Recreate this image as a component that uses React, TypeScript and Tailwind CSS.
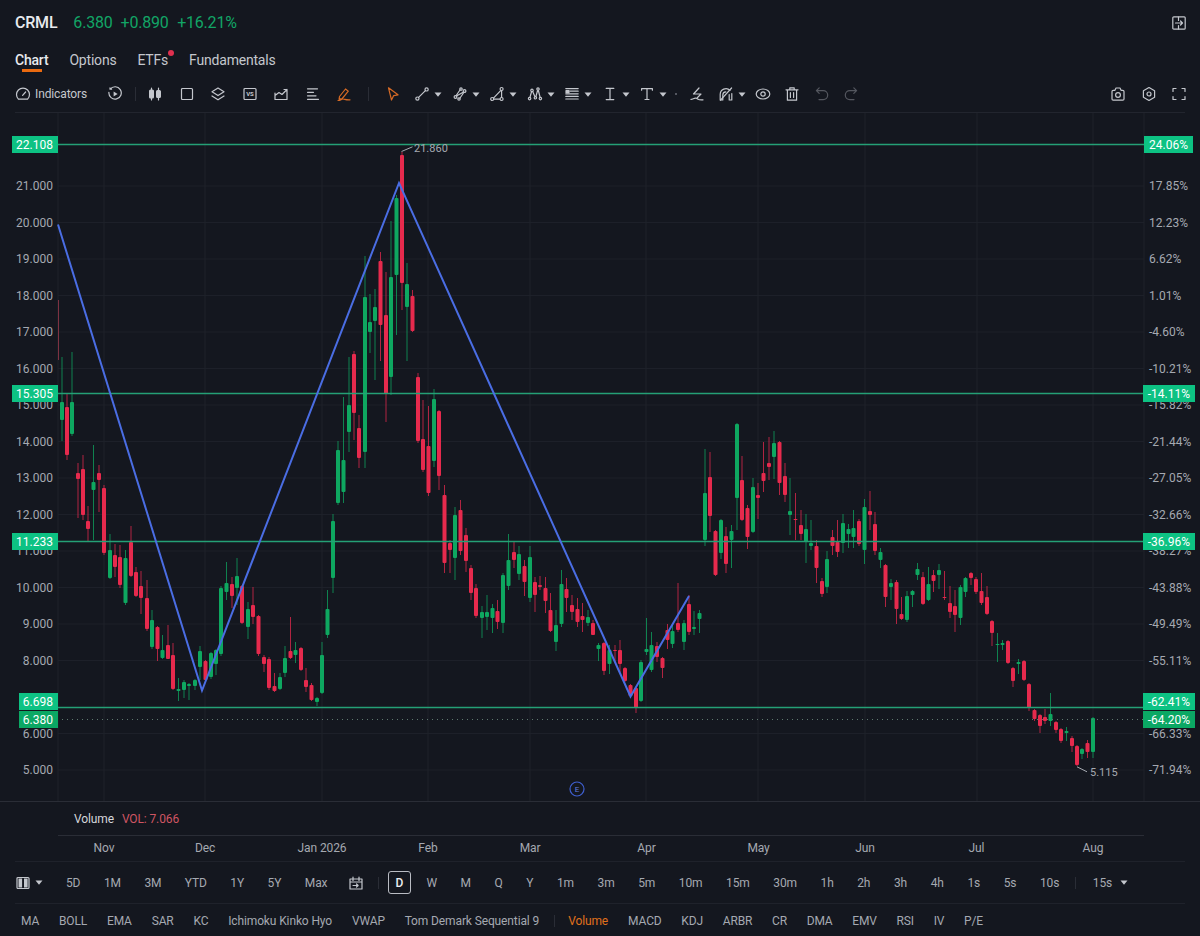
import type { ReactNode } from "react";

type Candle = [number, number, number, number, number, "r" | "g"];

// x, wick top, body top, body bottom, wick bottom
const candles: Candle[] = [
  [62, 357, 402, 420, 441, "g"], [67, 393, 407, 455, 460, "r"], [72, 352, 402, 434, 436, "g"],
  [78, 463, 473, 479, 518, "r"], [83, 455, 469, 515, 520, "r"], [88, 506, 521, 529, 541, "r"],
  [93.5, 445, 482, 490, 540, "g"], [99, 465, 473, 480, 512, "r"], [104, 485, 488, 553, 555, "r"],
  [110, 534, 550, 578, 579, "g"], [115, 544, 555, 567, 577, "r"], [120, 545, 557, 585, 588, "r"],
  [125.5, 550, 558, 603, 605, "g"], [131, 526, 542, 576, 577, "r"], [136, 567, 572, 596, 597, "r"],
  [141, 571, 586, 598, 614, "r"], [147, 580, 598, 629, 631, "r"], [152, 610, 620, 647, 649, "g"],
  [157.5, 626, 627, 649, 661, "r"], [162.5, 635, 650, 658, 659, "g"], [168, 625, 645, 659, 659, "r"],
  [173, 643, 655, 689, 690, "r"], [178.5, 678, 689, 691, 701, "g"], [184, 680, 682, 690, 698, "g"],
  [189, 683, 684, 686, 700, "g"], [195, 679, 680, 686, 690, "g"], [200, 646, 651, 667, 680, "g"],
  [205.5, 660, 661, 680, 682, "r"], [211, 652, 653, 677, 679, "g"], [216, 649, 650, 664, 675, "g"],
  [221, 586, 588, 654, 656, "g"], [226.5, 562, 583, 592, 600, "g"], [232, 577, 584, 596, 608, "r"],
  [237, 558, 576, 588, 605, "g"], [242, 585, 586, 623, 624, "r"], [248, 602, 609, 627, 639, "g"],
  [253, 587, 605, 617, 624, "r"], [258.5, 615, 616, 654, 656, "r"], [264, 655, 657, 664, 672, "r"],
  [269, 657, 659, 688, 690, "r"], [274.5, 673, 686, 691, 692, "r"], [280, 673, 677, 689, 690, "g"],
  [285, 646, 658, 673, 677, "g"], [290.5, 617, 651, 658, 659, "r"], [295.5, 642, 650, 655, 663, "g"],
  [301, 647, 648, 670, 671, "r"], [306, 668, 680, 687, 692, "r"], [311.5, 683, 685, 700, 701, "r"],
  [317, 697, 698, 702, 706, "g"], [322, 642, 655, 693, 694, "g"], [327.5, 590, 609, 635, 638, "g"],
  [333, 514, 521, 578, 593, "g"], [338, 441, 450, 503, 505, "g"], [343.5, 397, 460, 492, 503, "g"],
  [349, 357, 405, 432, 452, "g"], [354, 351, 354, 413, 440, "r"], [359, 415, 428, 458, 468, "r"],
  [365, 256, 297, 452, 468, "g"], [370, 294, 322, 332, 353, "g"], [375, 289, 307, 321, 380, "g"],
  [380.5, 252, 261, 325, 361, "r"], [386, 272, 315, 394, 422, "r"], [391, 221, 277, 377, 395, "g"],
  [396.5, 195, 198, 275, 335, "g"], [402, 152, 155, 283, 310, "r"], [407, 263, 284, 307, 361, "g"],
  [412.5, 290, 296, 331, 332, "r"], [418, 373, 377, 441, 443, "r"], [423, 400, 439, 470, 472, "r"],
  [428.5, 406, 446, 493, 496, "r"], [434, 389, 399, 461, 467, "g"], [439, 410, 411, 476, 490, "r"],
  [444.5, 485, 495, 563, 573, "r"], [450, 540, 543, 550, 573, "r"], [455, 507, 515, 558, 580, "g"],
  [460.5, 500, 510, 551, 555, "r"], [466, 528, 535, 561, 572, "r"], [471, 565, 568, 593, 600, "r"],
  [476, 584, 588, 616, 618, "r"], [482, 606, 612, 618, 638, "g"], [487, 595, 612, 617, 630, "g"],
  [492.5, 604, 608, 618, 633, "g"], [497.5, 600, 611, 622, 629, "r"], [503, 573, 575, 623, 633, "g"],
  [508.5, 534, 560, 586, 590, "g"], [514, 541, 552, 560, 568, "r"], [519, 546, 554, 574, 580, "g"],
  [524.5, 560, 566, 582, 596, "r"], [530, 546, 557, 598, 602, "g"], [535, 577, 582, 595, 612, "r"],
  [540, 576, 585, 587, 590, "r"], [545.5, 577, 588, 601, 613, "r"], [550.5, 593, 610, 631, 632, "r"],
  [556, 610, 625, 642, 651, "g"], [561.5, 570, 584, 624, 627, "g"], [566.5, 578, 589, 598, 612, "r"],
  [572, 595, 605, 612, 620, "r"], [577.5, 598, 609, 622, 627, "r"], [582.5, 603, 616, 620, 632, "r"],
  [588, 610, 617, 623, 626, "g"], [593, 620, 623, 635, 635, "r"], [598.5, 643, 645, 649, 661, "g"],
  [604, 642, 643, 671, 675, "r"], [609.5, 645, 650, 664, 674, "g"], [615, 645, 650, 651, 662, "r"],
  [620, 640, 650, 664, 672, "r"], [625, 667, 668, 681, 682, "r"], [630.5, 684, 685, 696, 698, "r"],
  [636, 687, 688, 708, 713, "r"], [641, 660, 662, 701, 702, "g"], [646.5, 618, 649, 652, 655, "g"],
  [651.5, 632, 645, 670, 672, "g"], [657, 642, 646, 657, 662, "r"], [662.5, 657, 658, 668, 678, "r"],
  [667.5, 624, 630, 640, 649, "r"], [672.5, 625, 631, 644, 648, "g"], [678, 583, 623, 630, 632, "r"],
  [684, 620, 623, 642, 650, "g"], [689, 595, 604, 632, 635, "r"], [694, 611, 627, 629, 635, "g"],
  [699.5, 610, 613, 619, 633, "g"], [705, 449, 493, 540, 546, "g"], [710, 452, 477, 516, 532, "r"],
  [715.5, 530, 531, 575, 576, "r"], [721, 519, 520, 553, 559, "g"], [726, 527, 536, 564, 573, "r"],
  [731.5, 525, 531, 540, 568, "g"], [737, 423, 424, 498, 530, "g"], [742, 456, 480, 520, 521, "r"],
  [747.5, 505, 508, 537, 549, "r"], [753, 478, 487, 532, 533, "g"], [758, 483, 495, 498, 519, "r"],
  [763.5, 442, 473, 481, 492, "r"], [769, 437, 463, 467, 480, "r"], [774, 431, 443, 457, 479, "g"],
  [779.5, 441, 442, 483, 495, "r"], [785, 463, 476, 495, 502, "r"], [790, 478, 511, 515, 535, "g"],
  [795.5, 493, 519, 520, 540, "r"], [801, 510, 525, 534, 540, "r"], [806, 514, 529, 542, 563, "g"],
  [811, 520, 543, 546, 550, "g"], [816.5, 540, 546, 568, 583, "r"], [822, 578, 581, 594, 597, "r"],
  [827, 551, 559, 587, 593, "g"], [832.5, 530, 537, 546, 555, "r"], [837.5, 520, 542, 552, 557, "r"],
  [843, 514, 523, 543, 553, "g"], [848.5, 524, 529, 534, 548, "g"], [853.5, 510, 528, 537, 548, "g"],
  [859, 519, 521, 544, 546, "r"], [864.5, 499, 507, 550, 564, "g"], [870, 491, 511, 515, 530, "r"],
  [875, 512, 524, 551, 555, "r"], [880.5, 548, 552, 560, 568, "g"], [885.5, 564, 565, 597, 607, "r"],
  [891, 579, 583, 587, 600, "g"], [896.5, 580, 582, 609, 624, "r"], [901.5, 597, 614, 619, 620, "r"],
  [907, 591, 596, 620, 622, "g"], [912.5, 590, 591, 595, 607, "g"], [917.5, 563, 569, 575, 580, "g"],
  [923, 572, 577, 604, 605, "r"], [928.5, 567, 584, 600, 601, "g"], [933.5, 570, 575, 581, 592, "r"],
  [939, 564, 570, 575, 589, "g"], [944.5, 571, 597, 598, 600, "r"], [950, 586, 603, 612, 618, "r"],
  [955, 590, 606, 615, 632, "r"], [960.5, 585, 587, 618, 625, "g"], [965.5, 577, 578, 592, 597, "g"],
  [971, 572, 573, 578, 585, "r"], [976, 577, 579, 592, 594, "r"], [981.5, 573, 591, 603, 605, "r"],
  [987, 586, 597, 614, 615, "r"], [992, 620, 621, 633, 646, "r"], [997.5, 633, 644, 645, 662, "g"],
  [1002.5, 640, 643, 645, 650, "g"], [1008, 640, 641, 663, 664, "r"], [1013, 667, 668, 681, 687, "r"],
  [1018.5, 659, 662, 664, 674, "g"], [1024, 660, 661, 680, 681, "r"], [1029, 683, 684, 708, 711, "r"],
  [1034.5, 709, 710, 719, 721, "r"], [1040, 714, 715, 726, 733, "r"], [1045, 709, 717, 721, 724, "r"],
  [1050.5, 693, 714, 721, 726, "g"], [1056, 721, 722, 730, 733, "r"], [1061, 728, 729, 741, 743, "r"],
  [1066.5, 727, 731, 733, 741, "g"], [1072, 736, 738, 746, 752, "r"], [1077, 745, 746, 765, 766, "r"],
  [1082, 748, 749, 754, 759, "g"], [1087.5, 740, 743, 752, 758, "r"], [1093, 717, 718, 752, 758, "g"],
];

const leftTicks = [
  ["21.000", 186], ["20.000", 222.5], ["19.000", 259], ["18.000", 295.5], ["17.000", 332], ["16.000", 368.5],
  ["15.000", 405], ["14.000", 441.5], ["13.000", 478], ["12.000", 514.5], ["11.000", 551], ["10.000", 587.5],
  ["9.000", 624], ["8.000", 660.5], ["6.000", 733.5], ["5.000", 770],
] as const;

const rightTicks = [
  ["17.85%", 186], ["12.23%", 222.5], ["6.62%", 259], ["1.01%", 295.5], ["-4.60%", 332], ["-10.21%", 368.5],
  ["-15.82%", 405], ["-21.44%", 441.5], ["-27.05%", 478], ["-32.66%", 514.5], ["-38.27%", 551], ["-43.88%", 587.5],
  ["-49.49%", 624], ["-55.11%", 660.5], ["-66.33%", 733.5], ["-71.94%", 770],
] as const;

const gridX = [58, 104, 205, 322, 428, 530, 646, 758, 865, 977, 1093, 1144];
const months = [
  ["Nov", 104], ["Dec", 205], ["Jan 2026", 322], ["Feb", 428], ["Mar", 530],
  ["Apr", 646.5], ["May", 758.5], ["Jun", 865], ["Jul", 976.5], ["Aug", 1093],
] as const;

const Ico = ({ children, className = "text-[#c4c7cd]" }: { children: ReactNode; className?: string }) => (
  <svg width="16" height="16" viewBox="0 0 16 16" fill="none" stroke="currentColor" strokeWidth="1.2" strokeLinecap="round" strokeLinejoin="round" className={`shrink-0 ${className}`}>
    {children}
  </svg>
);

const Caret = () => (
  <svg width="8" height="5" viewBox="0 0 8 5" className="shrink-0 text-[#c4c7cd]">
    <path d="M0.5 0.5h7L4 4.7z" fill="currentColor" />
  </svg>
);

const Sep = ({ className = "h-[14px]" }: { className?: string }) => <div className={`w-px bg-[#2a2d36] ${className}`} />;

const Tag = ({ top, left, width, text, dark }: { top: number; left: number; width: number; text: string; dark?: boolean }) => (
  <div
    className={`absolute h-[17px] flex items-center justify-end pr-[5px] text-[12px] leading-none text-white ${dark ? "bg-[#0ba864]" : "bg-[#0dc283]"}`}
    style={{ top, left, width }}
  >
    {text}
  </div>
);

const ranges = ["5D", "1M", "3M", "YTD", "1Y", "5Y", "Max"];
const periods = ["W", "M", "Q", "Y", "1m", "3m", "5m", "10m", "15m", "30m", "1h", "2h", "3h", "4h", "1s", "5s", "10s"];
const overlays = ["MA", "BOLL", "EMA", "SAR", "KC", "Ichimoku Kinko Hyo", "VWAP", "Tom Demark Sequential 9"];
const subs = ["MACD", "KDJ", "ARBR", "CR", "DMA", "EMV", "RSI", "IV", "P/E"];

export default function App() {
  return (
    <div className="w-[1200px] h-[936px] overflow-hidden bg-[#14171f] font-[Roboto,sans-serif] flex flex-col text-[#a5a9b1]">
      <div className="h-[44px] flex items-center justify-between pl-[15px] pr-[13px] pt-[1px]">
        <div className="flex items-center text-[16px] tracking-[-0.2px] text-[#12a566]">
          <span className="font-medium text-[#e8eaee] mr-[16px]">CRML</span>
          <span className="mr-[8px]">6.380</span>
          <span className="mr-[8.5px]">+0.890</span>
          <span>+16.21%</span>
        </div>
        <Ico>
          <rect x="1.8" y="1.8" width="12.4" height="12.4" rx="1" />
          <path d="M7.5 2v3.5M7.5 10.5V14M4.5 8h7M9.5 6l2 2-2 2" />
        </Ico>
      </div>

      <div className="h-[32px] flex items-start gap-[21px] pl-[15px] pt-[7px] text-[14px] leading-[18px] tracking-[-0.2px] text-[#c4c7cd]">
        <div className="relative font-medium text-[#e8eaee]">
          Chart
          <div className="absolute left-[7px] top-[18px] w-[20px] h-[3px] bg-[#ea6a10]" />
        </div>
        <div>Options</div>
        <div className="relative">
          ETFs
          <div className="absolute -right-[6px] -top-[1px] w-[6px] h-[6px] rounded-full bg-[#e0304f]" />
        </div>
        <div>Fundamentals</div>
      </div>

      <div className="h-[37px] mx-[15px] border-b border-[#22252e] flex items-center justify-between">
        <div className="flex items-center">
          <Ico>
            <path d="M3.4 13.2a6.5 6.5 0 1 1 9.2 0z" />
            <path d="M7.6 9.4L10.6 6" />
          </Ico>
          <span className="ml-[4px] w-[52px] text-[12px] tracking-[-0.12px] text-[#c4c7cd] whitespace-nowrap">Indicators</span>
          <div className="ml-[20px]">
            <Ico>
              <path d="M3 3.2V1.8M3 3.2h1.6M3.2 3.1a6.2 6.2 0 1 1-1.3 3.3" />
              <path d="M6.6 5.5v5l4-2.5z" fill="currentColor" stroke="none" />
            </Ico>
          </div>
          <Sep className="h-[14px] ml-[12px]" />
          <div className="flex items-center gap-[15.5px] ml-[11px]">
            <Ico>
              <path d="M4.5 2v12M11.5 2v12" />
              <rect x="2.6" y="4" width="3.8" height="8" rx="1" fill="currentColor" />
              <rect x="9.6" y="4.5" width="3.8" height="7" rx="1" fill="currentColor" />
            </Ico>
            <Ico>
              <rect x="2.5" y="2.5" width="11" height="11" rx="1" />
            </Ico>
            <Ico>
              <path d="M8 2l6 3.8L8 9.6 2 5.8z" />
              <path d="M2 10l6 3.8 6-3.8" />
            </Ico>
            <Ico>
              <rect x="2" y="2.5" width="12" height="11" rx="1" />
              <text x="8" y="10.3" textAnchor="middle" fontSize="6" fontWeight="700" fill="currentColor" stroke="none">VS</text>
            </Ico>
            <Ico>
              <path d="M2 7v6.5h12V6M2 9.5l4-3 3 2 5-5M11 3.5h3V6" />
            </Ico>
            <Ico>
              <path d="M2.5 2.8h10M2.5 6.3h6M2.5 9.8h8.5M2.5 13.3h11" />
            </Ico>
            <Ico className="text-[#d56a25]">
              <path d="M3.5 10.5L9.5 3l2.8 2.2-6 7.3-3.2.6zM2 14.5c3 0 3-1.5 5-1.5s2 1 7 .8" />
            </Ico>
          </div>
          <Sep className="h-[14px] ml-[16px]" />
          <div className="ml-[16px]">
            <Ico className="text-[#d56a25]">
              <path d="M3.5 1.8l9.5 7-4.3.8L6.5 14z" />
            </Ico>
          </div>
          <div className="ml-[13px] flex items-center gap-[4px]">
            <Ico>
              <circle cx="3.4" cy="12.6" r="1.6" />
              <circle cx="12.6" cy="3.4" r="1.6" />
              <path d="M4.6 11.4l6.8-6.8" />
            </Ico>
            <Caret />
          </div>
          <div className="ml-[9.5px] flex items-center gap-[4px]">
            <Ico>
              <circle cx="3.5" cy="11" r="1.4" />
              <circle cx="12.5" cy="5" r="1.4" />
              <circle cx="7" cy="13" r="1.2" />
              <circle cx="9" cy="3" r="1.2" />
              <path d="M4.5 10L11.5 6M8 12l3.5-5M4.5 9L8 4" />
            </Ico>
            <Caret />
          </div>
          <div className="ml-[9.5px] flex items-center gap-[4px]">
            <Ico>
              <path d="M3.5 13.2L12.6 3.6V13.2z" />
              <circle cx="3.2" cy="13" r="1.5" fill="#14171f" />
              <circle cx="12.6" cy="13" r="1.5" fill="#14171f" />
              <circle cx="12.6" cy="3" r="1.5" fill="#14171f" />
            </Ico>
            <Caret />
          </div>
          <div className="ml-[9.5px] flex items-center gap-[4px]">
            <Ico>
              <path d="M2.5 13L5 4l3.5 8 2.5-9 2.5 10" />
              <circle cx="2.6" cy="12.6" r="1.2" fill="#14171f" />
              <circle cx="5" cy="4.4" r="1.2" fill="#14171f" />
              <circle cx="8.4" cy="11.8" r="1.2" fill="#14171f" />
              <circle cx="11" cy="3" r="1.2" fill="#14171f" />
              <circle cx="13.4" cy="12.6" r="1.2" fill="#14171f" />
            </Ico>
            <Caret />
          </div>
          <div className="ml-[9.5px] flex items-center gap-[4px]">
            <Ico>
              <path d="M1.8 2.6h12.4M6 5.2h8.2M1.8 7.8h12.4M1.8 10.4h12.4M1.8 13h12.4" />
              <rect x="2" y="4.6" width="3" height="2" fill="currentColor" />
            </Ico>
            <Caret />
          </div>
          <div className="ml-[9.5px] flex items-center gap-[4px]">
            <Ico>
              <path d="M4.2 2.4h7.6M8 2.4v11.2M4.2 13.6h7.6" />
            </Ico>
            <Caret />
          </div>
          <div className="ml-[9.5px] flex items-center gap-[4px]">
            <Ico>
              <path d="M2.6 4.2V2.6h10.8v1.6M8 2.6v10.9M6 13.5h4" />
            </Ico>
            <Caret />
          </div>
          <div className="ml-[8px] w-[2px] h-[2px] rounded-full bg-[#6a6e77]" />
          <div className="ml-[12px]">
            <Ico>
              <path d="M10 2L4.5 8h7.5l-3.5 3.5M2 13.4c2 0 3-1.6 5-1.2s2 2.2 7 1.6" />
            </Ico>
          </div>
          <div className="ml-[13px] flex items-center gap-[4px]">
            <Ico>
              <path d="M2.2 14V8.5a5.8 5.8 0 0 1 9.8-4.2M13.8 7.5V14h-2.6V8.6M2.2 14h2.6V9a3.2 3.2 0 0 1 3-3.2" />
              <path d="M2.5 14.2L13.6 2" />
            </Ico>
            <Caret />
          </div>
          <div className="ml-[8.5px]">
            <Ico>
              <ellipse cx="8" cy="8" rx="6.8" ry="5" />
              <circle cx="8" cy="8" r="2.2" />
            </Ico>
          </div>
          <div className="ml-[13px]">
            <Ico>
              <path d="M2 3.8h12M5.8 3.6V1.8h4.4v1.8M3.4 3.8v10.4h9.2V3.8M6.4 6.5v5M9.6 6.5v5" />
            </Ico>
          </div>
          <div className="ml-[14px]">
            <Ico className="text-[#54575f]">
              <path d="M5.2 1.8L2.4 4.6l2.8 2.8M2.6 4.6h6.6a4.5 4.5 0 0 1 0 9H5" />
            </Ico>
          </div>
          <div className="ml-[13px]">
            <Ico className="text-[#54575f]">
              <path d="M10.8 1.8l2.8 2.8-2.8 2.8M13.4 4.6H6.8a4.5 4.5 0 0 0 0 9H11" />
            </Ico>
          </div>
        </div>
        <div className="flex items-center gap-[14.5px] mr-[-2px]">
          <Ico>
            <path d="M2 5.6c0-.8.5-1.2 1.2-1.2h1.6L6 2h4l1.2 2.4h1.6c.7 0 1.2.4 1.2 1.2v7.4c0 .7-.5 1.2-1.2 1.2H3.2c-.7 0-1.2-.5-1.2-1.2z" />
            <circle cx="8" cy="9" r="2.4" />
          </Ico>
          <Ico>
            <path d="M8 1.5l5.6 3.2v6.6L8 14.5l-5.6-3.2V4.7z" />
            <circle cx="8" cy="8" r="2" />
          </Ico>
          <Ico>
            <path d="M2 5.5V2.5h3M11 2.5h3v3M14 10.5v3h-3M5 13.5H2v-3" />
          </Ico>
        </div>
      </div>

      <div className="relative h-[689px] border-b border-[#2a2d36]">
        <svg className="block" width="1200" height="688" viewBox="0 113 1200 688">
          {leftTicks.map(([, y]) => (
            <line key={y} x1="58" x2="1144" y1={y} y2={y} stroke="#1d2029" />
          ))}
          {gridX.map((x) => (
            <line key={x} x1={x} x2={x} y1="113" y2="801" stroke="#1f222b" />
          ))}
          <line x1="58.5" x2="58.5" y1="300" y2="360" stroke="#7d3242" />
          {candles.map(([x, wt, bt, bb, wb, side]) => {
            const color = side === "r" ? "#e62a4d" : "#0ea760";
            return (
              <g key={x}>
                <line x1={x} x2={x} y1={wt} y2={wb} stroke={color} strokeOpacity="0.75" />
                <rect x={x - 2} y={bt} width="4" height={bb - bt} rx="1" fill={color} />
              </g>
            );
          })}
          {[144.5, 393.5, 541.5, 707.5].map((y) => (
            <line key={y} x1="58" x2="1144" y1={y} y2={y} stroke="#24a076" strokeWidth="1.4" />
          ))}
          <line x1="62" x2="1143" y1="719.5" y2="719.5" stroke="#5f7a70" strokeDasharray="1 4" />
          <polyline points="58,224.5 202,690.5 399,183 630.5,696.5 689,596" fill="none" stroke="#4a6de3" strokeWidth="2" />
          <g fontSize="12" fill="#a5a9b1">
            {leftTicks.map(([t, y]) => (
              <text key={t} x="53" y={y} textAnchor="end" dominantBaseline="central">{t}</text>
            ))}
            {rightTicks.map(([t, y]) => (
              <text key={t} x="1149" y={y} dominantBaseline="central">{t}</text>
            ))}
          </g>
          <path d="M401.5 151.5L412.5 146.8M1077 766.8L1087 771.8" stroke="#a5a9b1" fill="none" />
          <text x="414" y="148" fontSize="11" fill="#a5a9b1" dominantBaseline="central">21.860</text>
          <text x="1090" y="772" fontSize="11" fill="#a5a9b1" dominantBaseline="central">5.115</text>
          <circle cx="577" cy="789" r="7" fill="none" stroke="#3f5fd0" strokeWidth="1.2" />
          <text x="577" y="789.5" fontSize="8" fill="#5f7de0" textAnchor="middle" dominantBaseline="central">E</text>
        </svg>
        <Tag top={23} left={12} width={46} text="22.108" />
        <Tag top={272} left={12} width={46} text="15.305" />
        <Tag top={420} left={12} width={46} text="11.233" />
        <Tag top={580} left={19} width={39} text="6.698" />
        <Tag top={598} left={19} width={39} text="6.380" dark />
        <Tag top={23} left={1144} width={49} text="24.06%" />
        <Tag top={272} left={1143} width={52} text="-14.11%" />
        <Tag top={420} left={1143} width={52} text="-36.96%" />
        <Tag top={580} left={1143} width={52} text="-62.41%" />
        <Tag top={598} left={1143} width={52} text="-64.20%" dark />
      </div>

      <div className="h-[34px] ml-[58px] mr-[56px] border-b border-[#2a2d36] flex items-center pl-[16px] pt-[1px] text-[12px] tracking-[-0.12px]">
        <span className="text-[#d4d6db] mr-[8px]">Volume</span>
        <span className="text-[#cf5563]">VOL: 7.066</span>
      </div>

      <div className="relative h-[25px] text-[12px] tracking-[-0.12px]">
        {months.map(([m, x]) => (
          <span key={m} className="absolute top-[4px] -translate-x-1/2 leading-[16px]" style={{ left: x }}>{m}</span>
        ))}
      </div>

      <div className="h-[43px] mx-[15px] border-y border-[#1f222b] flex items-center text-[12px] tracking-[-0.12px]">
        <Ico>
          <rect x="2" y="2.5" width="12" height="11" rx="1" />
          <rect x="3.5" y="3.5" width="3.6" height="9" fill="currentColor" stroke="none" />
          <rect x="9" y="3.5" width="3.6" height="9" fill="currentColor" stroke="none" />
        </Ico>
        <div className="ml-[4px]"><Caret /></div>
        <div className="flex items-center gap-[23.5px] ml-[23px]">
          {ranges.map((r) => <span key={r}>{r}</span>)}
        </div>
        <div className="ml-[21px]">
          <Ico>
            <path d="M2 4h12v10H2zM5 2v3.5M11 2v3.5M2 7h12M5 10.5h5M8.5 9l1.6 1.5L8.5 12" />
          </Ico>
        </div>
        <Sep className="h-[12px] ml-[14px]" />
        <div className="ml-[8.5px] w-[23px] h-[23px] rounded-[3px] border border-[#b9bcc3] flex items-center justify-center font-medium text-[#eceef1]">D</div>
        <div className="ml-[15.5px] flex items-center gap-[23.6px]">
          {periods.map((p) => <span key={p}>{p}</span>)}
        </div>
        <Sep className="h-[12px] ml-[16px]" />
        <span className="ml-[16.5px]">15s</span>
        <div className="ml-[8px]"><Caret /></div>
      </div>

      <div className="flex-1 flex items-center pl-[21px] pt-[2px] text-[12px] tracking-[-0.12px]">
        <div className="flex items-center gap-[19.8px]">
          {overlays.map((o) => <span key={o}>{o}</span>)}
        </div>
        <Sep className="h-[12px] ml-[15px]" />
        <span className="ml-[13px] text-[#e0711c]">Volume</span>
        <div className="ml-[20px] flex items-center gap-[19.7px]">
          {subs.map((s) => <span key={s}>{s}</span>)}
        </div>
      </div>
    </div>
  );
}
